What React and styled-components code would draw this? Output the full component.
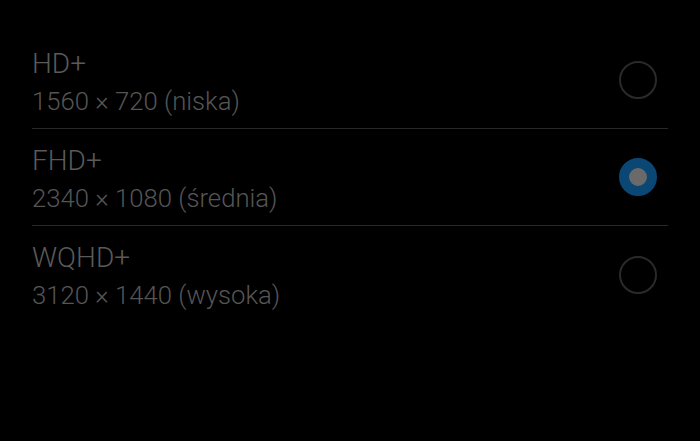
import { useState } from 'react'
import styled, { createGlobalStyle } from 'styled-components'

const GlobalStyle = createGlobalStyle`
	html, body {
		margin: 0;
		padding: 0;
		background: #000;
	}
	body {
		font-family: Roboto, "Noto Sans", sans-serif;
	}
`

const Screen = styled.main`
	width: 700px;
	height: 441px;
	background: #000;
	padding: 32px 32px 0 32px;
	box-sizing: border-box;
`

const List = styled.ul`
	list-style: none;
	margin: 0;
	padding: 0;
`

const Option = styled.li`
	display: flex;
	align-items: center;
	justify-content: space-between;
	height: 97px;
	box-sizing: border-box;
	border-bottom: ${({ $last }) => ($last ? 'none' : '1px solid #292929')};
	cursor: pointer;
`

const Labels = styled.div`
	display: flex;
	flex-direction: column;
	gap: 7px;
	padding-top: 4px;
`

const Name = styled.span`
	font-size: 28px;
	font-weight: 300;
	line-height: 30px;
	color: #5a5a5a;
`

const Detail = styled.span`
	font-size: 25.7px;
	font-weight: 300;
	line-height: 30px;
	color: #555;
`

const Radio = styled.span`
	width: 38px;
	height: 38px;
	margin-right: 11px;
	box-sizing: border-box;
	border-radius: 50%;
	border: ${({ $checked }) => ($checked ? '10px solid #0a4775' : '2px solid #2a2a2a')};
	background: ${({ $checked }) => ($checked ? '#6a6a6a' : 'transparent')};
`

const resolutions = [
	{ id: 'hd', name: 'HD+', size: '1560 × 720 (niska)' },
	{ id: 'fhd', name: 'FHD+', size: '2340 × 1080 (średnia)' },
	{ id: 'wqhd', name: 'WQHD+', size: '3120 × 1440 (wysoka)' },
]

const App = () => {
	const [selected, setSelected] = useState('fhd')

	return (
		<>
			<GlobalStyle />
			<Screen>
				<List>
					{resolutions.map((item, i) => (
						<Option key={item.id} $last={i === resolutions.length - 1} onClick={() => setSelected(item.id)}>
							<Labels>
								<Name>{item.name}</Name>
								<Detail>{item.size}</Detail>
							</Labels>
							<Radio $checked={selected === item.id} />
						</Option>
					))}
				</List>
			</Screen>
		</>
	)
}

export default App
